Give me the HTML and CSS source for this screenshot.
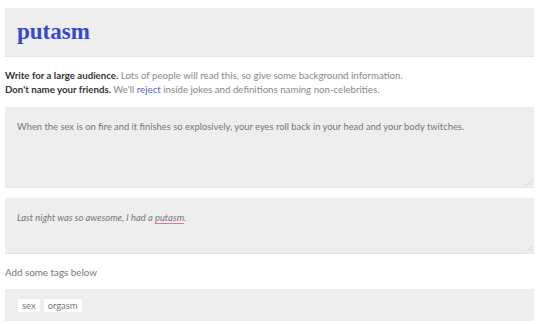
FILE: index.html
```html
<!DOCTYPE html>
<html lang="en">
<head>
    <meta charset="UTF-8">
    <meta name="viewport" content="width=device-width, initial-scale=1.0">
    <title>Add a definition</title>
    <link rel="stylesheet" href="styles.css">
</head>
<body>
    <div class="define-form">
        <div class="word-box">
            <h1 class="word">putasm</h1>
        </div>

        <div class="guidelines">
            <p><strong>Write for a large audience.</strong> Lots of people will read this, so give some background information.</p>
            <p><strong>Don't name your friends.</strong> We'll <a href="#">reject</a> inside jokes and definitions naming non-celebrities.</p>
        </div>

        <div class="field meaning">When the sex is on fire and it finishes so explosively, your eyes roll back in your head and your body twitches.</div>

        <div class="field example">Last night was so awesome, I had a <span class="misspelled">putasm</span>.</div>

        <p class="tags-label">Add some tags below</p>

        <div class="tags-box">
            <span class="tag">sex</span>
            <span class="tag">orgasm</span>
        </div>
    </div>
</body>
</html>
```

FILE: styles.css
```css
body {
    margin: 0;
    padding: 8px 6px 0 5px;
    font-family: Lato, "Open Sans", sans-serif;
    color: #444;
    background: #fff;
}

.word-box {
    background: #eeeeee;
    height: 48px;
    border-bottom: 1px dotted #e0e0e0;
    padding: 0 12px;
    display: flex;
    align-items: center;
}

.word {
    margin: 0;
    font-family: "Liberation Serif", "DejaVu Serif", serif;
    font-size: 23px;
    font-weight: bold;
    color: #3449cf;
}

.guidelines {
    margin: 11px 0 11px;
    font-size: 9.7px;
    line-height: 14px;
    color: #888;
}

.guidelines p {
    margin: 0;
}

.guidelines strong {
    color: #333;
}

.guidelines a {
    color: #5466c8;
    text-decoration: none;
}

/* faint resize grip drawn in the corner */
.field {
    background-color: #eeeeee;
    background-image: linear-gradient(135deg, transparent 0 60%, #d2d2d2 60% 70%, transparent 70% 80%, #d2d2d2 80% 90%, transparent 90%);
    background-repeat: no-repeat;
    background-position: right 2px bottom 2px;
    background-size: 7px 7px;
    border-bottom: 1px solid #e6e6e6;
    padding: 13px 12px;
    font-size: 9.4px;
    line-height: 14px;
    color: #777;
    box-sizing: border-box;
}

.meaning {
    height: 81px;
    margin-bottom: 10px;
}

.example {
    height: 56px;
    font-style: italic;
}

.misspelled {
    text-decoration: underline #e2798a;
    text-decoration-thickness: 1px;
    text-underline-offset: 2px;
}

.tags-label {
    margin: 12px 0 11px;
    font-size: 9.8px;
    color: #777;
}

.tags-box {
    background: #eeeeee;
    height: 32px;
    padding: 0 13px;
    display: flex;
    align-items: center;
    gap: 4px;
}

.tag {
    background: #fff;
    padding: 1px 4px;
    font-size: 9.4px;
    color: #777;
}
```
